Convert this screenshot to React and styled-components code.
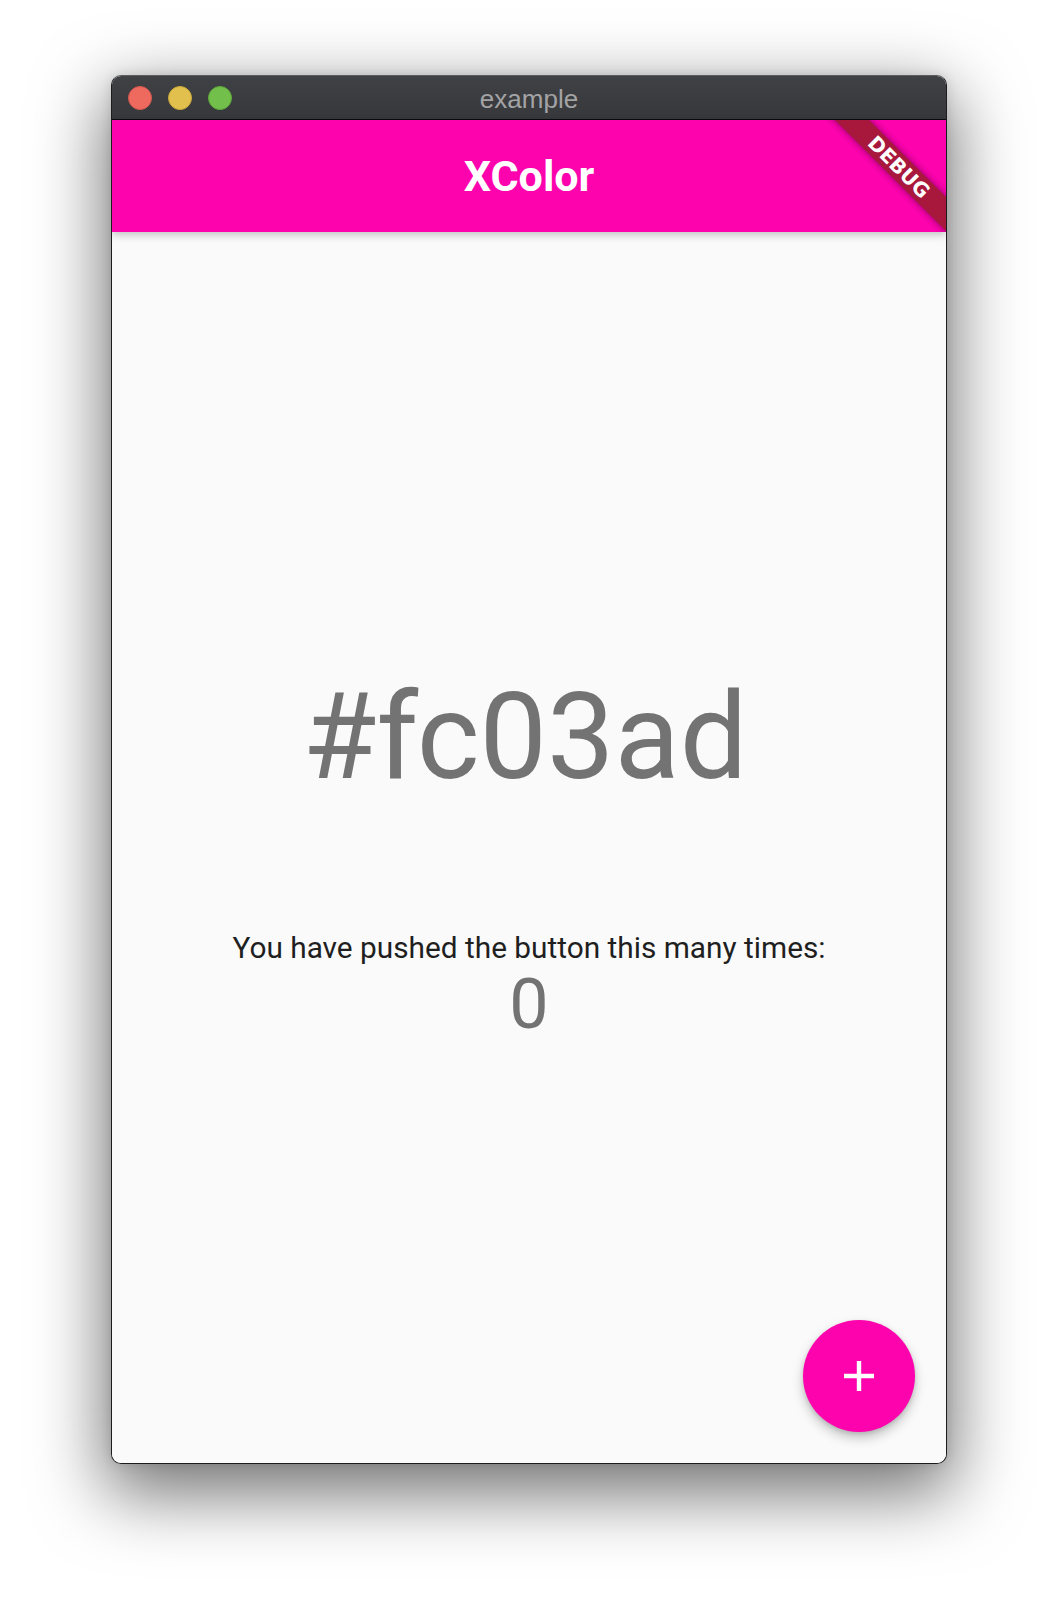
import styled, {createGlobalStyle} from "styled-components";

const GlobalStyle = createGlobalStyle`
   html, body {
      margin: 0;
      padding: 0;
      background: #ffffff;
   }
`;

const Page = styled.div`
   width: 1058px;
   height: 1612px;
   box-sizing: border-box;
   padding-top: 75px;
   display: flex;
   justify-content: center;
   align-items: flex-start;
   background: #ffffff;
`;

const Window = styled.div`
   width: 836px;
   height: 1389px;
   box-sizing: border-box;
   border: 1px solid #1c1c1e;
   border-top-color: #5c5d60;
   border-radius: 10px;
   overflow: hidden;
   display: flex;
   flex-direction: column;
   background: #fafafa;
   box-shadow: 0 24px 70px 6px rgba(0, 0, 0, 0.55), 0 0 12px rgba(0, 0, 0, 0.12);
`;

const TitleBar = styled.div`
   height: 43px;
   flex-shrink: 0;
   display: grid;
   grid-template-columns: 1fr auto 1fr;
   align-items: center;
   background: linear-gradient(#404144, #37383b);
   border-bottom: 1px solid #0b0b0c;
`;

const Lights = styled.div`
   display: flex;
   gap: 16px;
   padding-left: 16px;
`;

const Light = styled.span`
   width: 24px;
   height: 24px;
   border-radius: 50%;
   box-sizing: border-box;
   background: ${(props) => props.color};
   border: 1px solid ${(props) => props.edge};
`;

const WindowTitle = styled.div`
   font-family: "Liberation Sans", Arial, sans-serif;
   font-size: 26px;
   color: #a3a3a5;
   line-height: 1;
   padding-top: 2px;
`;

const AppBar = styled.header`
   position: relative;
   z-index: 2;
   height: 112px;
   flex-shrink: 0;
   display: flex;
   align-items: center;
   justify-content: center;
   background: #fc03ad;
   box-shadow: 0 3px 8px rgba(0, 0, 0, 0.22);
   overflow: hidden;
`;

const AppTitle = styled.h1`
   margin: 0;
   font-family: Roboto, "Noto Sans", sans-serif;
   font-weight: 700;
   font-size: 43px;
   color: #ffffff;
   line-height: 1;
`;

const Banner = styled.div`
   position: absolute;
   top: 35px;
   right: -53px;
   width: 200px;
   height: 24px;
   display: flex;
   align-items: center;
   justify-content: center;
   background: #a8173c;
   transform: rotate(45deg);
   box-shadow: 0 0 7px rgba(0, 0, 0, 0.45);
   font-family: "DejaVu Sans", Verdana, sans-serif;
   font-weight: 700;
   font-size: 20px;
   color: #ffffff;
   line-height: 1;
`;

const Body = styled.main`
   position: relative;
   flex: 1;
   display: flex;
   flex-direction: column;
   align-items: center;
   padding-top: 445px;
   background: #fafafa;
`;

const HexText = styled.div`
   font-family: Roboto, "Noto Sans", sans-serif;
   font-size: 120px;
   line-height: 1;
   color: #737373;
   margin: 0 8px 136px 0;
`;

const Message = styled.div`
   font-family: Roboto, "Noto Sans", sans-serif;
   font-size: 29.8px;
   line-height: 1;
   color: #1f1f1f;
`;

const Counter = styled.div`
   font-family: Roboto, "Noto Sans", sans-serif;
   font-size: 70px;
   line-height: 1;
   color: #737373;
   margin-top: 6px;
`;

const Fab = styled.button`
   position: absolute;
   right: 31px;
   bottom: 31px;
   width: 112px;
   height: 112px;
   border: none;
   border-radius: 50%;
   padding: 0;
   display: flex;
   align-items: center;
   justify-content: center;
   background: #fc03ad;
   box-shadow: 0 6px 12px rgba(0, 0, 0, 0.22), 0 2px 4px rgba(0, 0, 0, 0.12);
   cursor: pointer;
`;

const PlusIcon = () => (
    <svg width="30" height="30" viewBox="0 0 30 30">
        <path d="M15 0 V30 M0 15 H30" stroke="#ffffff" strokeWidth="4.4" fill="none" />
    </svg>
);

const App = () => {
    const color = "#fc03ad";
    const count = 0;

    return (
        <>
            <GlobalStyle />
            <Page>
                <Window>
                    <TitleBar>
                        <Lights>
                            <Light color="#ee6a5f" edge="#d5584d" />
                            <Light color="#e2c04d" edge="#c9a83d" />
                            <Light color="#72c04b" edge="#5ea83b" />
                        </Lights>
                        <WindowTitle>example</WindowTitle>
                        <span />
                    </TitleBar>

                    <AppBar>
                        <AppTitle>XColor</AppTitle>
                        <Banner>DEBUG</Banner>
                    </AppBar>

                    <Body>
                        <HexText>{color}</HexText>
                        <Message>You have pushed the button this many times:</Message>
                        <Counter>{count}</Counter>
                        <Fab aria-label="Increment">
                            <PlusIcon />
                        </Fab>
                    </Body>
                </Window>
            </Page>
        </>
    );
};

export default App;
